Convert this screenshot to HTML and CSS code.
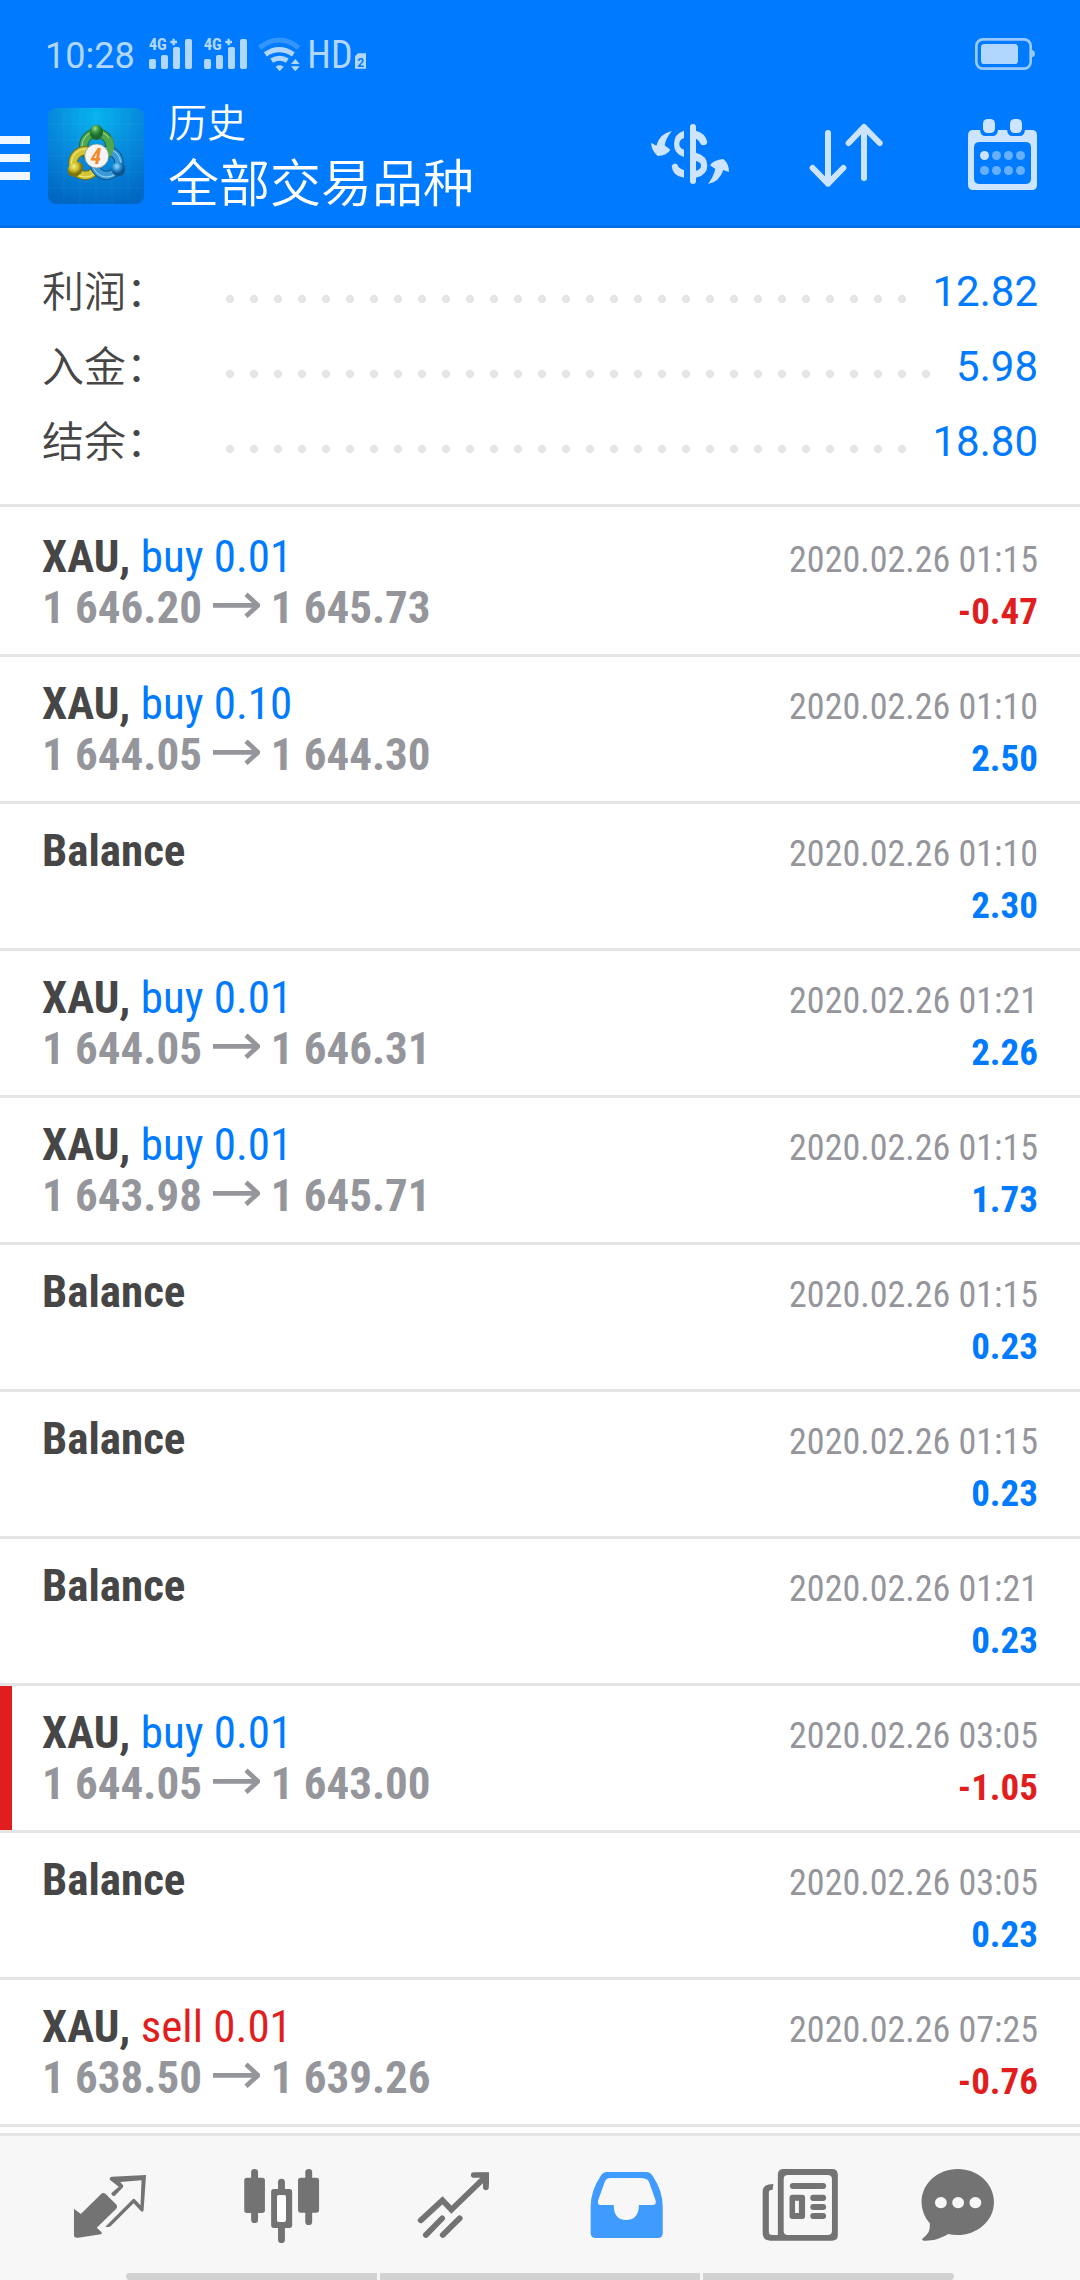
FILE: index.html
```html
<!DOCTYPE html>
<html lang="zh-CN">
<head>
<meta charset="utf-8">
<meta name="viewport" content="width=device-width, initial-scale=1">
<title>历史</title>
<link rel="stylesheet" href="styles.css">
</head>
<body>
<svg class="symbols" aria-hidden="true">
  <symbol id="arrow" viewBox="0 0 144 78"><path d="M3 40h126M102 7l36 33-36 33" fill="none" stroke="currentColor" stroke-width="14"/></symbol>
</svg>
<div class="app">
  <header class="header">
    <div class="status">
      <time class="clock">10:28</time>
      <svg class="signal" viewBox="0 0 132 96" aria-hidden="true">
        <text class="net" x="2" y="40">4G</text>
        <path d="M77 5v20M67 15h20" stroke="currentColor" stroke-width="7"/>
        <rect x="3" y="66" width="21" height="30" rx="6"/><rect x="39" y="54" width="21" height="42" rx="6"/><rect x="75" y="30" width="21" height="66" rx="6"/><rect x="111" y="6" width="21" height="90" rx="6"/>
      </svg>
      <svg class="signal" viewBox="0 0 132 96" aria-hidden="true">
        <text class="net" x="2" y="40">4G</text>
        <path d="M77 5v20M67 15h20" stroke="currentColor" stroke-width="7"/>
        <rect x="3" y="66" width="21" height="30" rx="6"/><rect x="39" y="54" width="21" height="42" rx="6"/><rect x="75" y="30" width="21" height="66" rx="6"/><rect x="111" y="6" width="21" height="90" rx="6"/>
      </svg>
      <svg class="wifi" viewBox="387 50 129 105" aria-hidden="true">
        <path d="M392 82Q450 36 509 82" fill="none" stroke="#3396ff" stroke-width="15"/>
        <path d="M409 102Q450 74 493 102M428 121Q452 106 475 121" fill="none" stroke="currentColor" stroke-width="15"/>
        <path d="M440 139q12-8 24 0l-12 14zM486 131l13-15 13 15zM486 138h26l-13 15z"/>
      </svg>
      <svg class="hd" viewBox="0 0 168 90" aria-hidden="true">
        <text class="hd-label" x="-8" y="84">HD</text>
        <path d="M144 40h24v46h-33V49z"/>
        <text class="sim" x="142" y="80">2</text>
      </svg>
      <svg class="battery" viewBox="0 0 180 96" aria-hidden="true">
        <rect x="4" y="4" width="163" height="88" rx="20" fill="none" stroke="#99caff" stroke-width="8"/>
        <rect x="18" y="18" width="111" height="60" rx="10"/>
        <path d="M171 36q9 3 9 11t-9 11z" fill="#99caff"/>
      </svg>
    </div>
    <div class="toolbar">
      <button class="menu" aria-label="菜单"><span></span><span></span><span></span></button>
      <svg class="logo" viewBox="0 0 288 288" aria-hidden="true">
        <defs>
          <radialGradient id="tile" cx=".5" cy=".08" r=".95"><stop offset="0" stop-color="#06b5ee"/><stop offset=".5" stop-color="#0789dc"/><stop offset="1" stop-color="#0067c2"/></radialGradient>
          <radialGradient id="green" cx=".4" cy=".25"><stop offset="0" stop-color="#a0dc90"/><stop offset=".5" stop-color="#3d9c45"/><stop offset="1" stop-color="#1c6a2c"/></radialGradient>
          <radialGradient id="gold" cx=".4" cy=".3"><stop offset="0" stop-color="#f6f08a"/><stop offset=".6" stop-color="#c9ba26"/><stop offset="1" stop-color="#7d7410"/></radialGradient>
          <radialGradient id="blue" cx=".4" cy=".3"><stop offset="0" stop-color="#9bdcfa"/><stop offset=".6" stop-color="#2a8fd0"/><stop offset="1" stop-color="#0d5590"/></radialGradient>
        </defs>
        <rect width="288" height="288" rx="24" fill="url(#tile)"/>
        <path d="M48 0v288M96 0v288M144 0v288M192 0v288M240 0v288M0 48h288M0 96h288M0 144h288M0 192h288M0 240h288" stroke="#fff" stroke-opacity=".08" stroke-width="2" fill="none"/>
        <g fill="none">
          <circle cx="146" cy="114" r="39" stroke="#1f6b2c" stroke-width="28"/><circle cx="146" cy="114" r="39" stroke="#4fa84f" stroke-width="22"/><circle cx="146" cy="114" r="44" stroke="#a8d99a" stroke-width="3"/>
          <circle cx="112" cy="165" r="37" stroke="#7b7010" stroke-width="28"/><circle cx="112" cy="165" r="37" stroke="#d3c534" stroke-width="22"/><circle cx="112" cy="165" r="42" stroke="#f4ee90" stroke-width="3"/>
          <circle cx="176" cy="165" r="37" stroke="#0d5590" stroke-width="28"/><circle cx="176" cy="165" r="37" stroke="#3a9ad8" stroke-width="22"/><circle cx="176" cy="165" r="42" stroke="#9ad8f8" stroke-width="3"/>
          <path d="M180 91a39 39 0 0 1-2 48" stroke="#4fa84f" stroke-width="22"/>
        </g>
        <ellipse cx="145" cy="73" rx="20" ry="23" fill="url(#green)"/>
        <path d="M60 180q10-22 36-18 16 12 5 31-16 22-36 9-8-7-5-22z" fill="url(#gold)"/>
        <path d="M190 184q0-20 20-22 18 0 21 20 0 20-18 23-20-1-23-21z" fill="url(#blue)"/>
        <circle cx="146" cy="144" r="36" fill="#f4f4f4" stroke="#7b8a80" stroke-width="2"/>
        <text class="four" x="144" y="167" text-anchor="middle">4</text>
      </svg>
      <div class="titles">
        <p class="section">历史</p>
        <h1 class="symbol-title">全部交易品种</h1>
      </div>
      <div class="actions">
        <button class="action" aria-label="货币"><svg viewBox="144 336 252 252">
          <path d="M270 381q0-9 9-9t9 9v162q0 9-9 9t-9-9z"/>
          <path d="M252 392v22q-14 5-14 18t14 17v22q-30-8-30-39t30-40zM252 533v-22q-18-7-19-16-8-10-18 2 2 31 37 36zM288 392q29 8 34 34-2 10-12 10-7 0-10-8-3-8-12-12zM288 458q34 9 34 39 0 28-34 36v-21q15-4 15-15t-15-14z"/>
          <path d="M216 393q-18 20-22 43l17 13q-10 17-38 19-18-15-20-40l16 9q9-36 47-44zM324 552q16-21 22-45l-16-11q11-17 40-19 17 14 17 39l-17-6q-12 36-46 42z"/>
        </svg></button>
        <button class="action" aria-label="排序"><svg class="lines" viewBox="612 336 252 252">
          <path d="M684 399v152M638 504l46 47 46-47M792 534V381M746 429l46-48 47 48"/>
        </svg></button>
        <button class="action" aria-label="日历"><svg viewBox="1080 336 252 252">
          <path fill-rule="evenodd" d="M1120 390h20q2 18 16 18h22q14 0 16-18h27q2 18 16 18h22q14 0 16-18h20q16 0 16 16v148q0 16-16 16h-175q-16 0-16-16V406q0-16 16-16zm20 36q-18 0-18 16v94q0 16 18 16h136q17 0 17-16v-94q0-16-17-16z"/>
          <rect x="1149" y="357" width="36" height="42" rx="14"/><rect x="1230" y="357" width="36" height="42" rx="14"/>
          <circle cx="1153.500" cy="466.500" r="13.500"/>
          <g fill="#66b0ff"><circle cx="1189.500" cy="466.500" r="13.500"/><circle cx="1225.500" cy="466.500" r="13.500"/><circle cx="1261.500" cy="466.500" r="13.500"/><circle cx="1153.500" cy="511.500" r="13.500"/><circle cx="1189.500" cy="511.500" r="13.500"/><circle cx="1225.500" cy="511.500" r="13.500"/><circle cx="1261.500" cy="511.500" r="13.500"/></g>
        </svg></button>
      </div>
    </div>
  </header>

  <main class="content">
    <dl class="summary">
      <div class="total"><dt>利润：</dt><dd>12.82</dd></div>
      <div class="total"><dt>入金：</dt><dd>5.98</dd></div>
      <div class="total"><dt>结余：</dt><dd>18.80</dd></div>
    </dl>
    <ul class="deals">
      <li class="deal"><div class="left"><p class="name"><b>XAU,</b> <span class="buy">buy 0.01</span></p><p class="prices">1 646.20 <svg class="arrow"><use href="#arrow"/></svg> 1 645.73</p></div><div class="right"><time>2020.02.26 01:15</time><span class="profit loss">-0.47</span></div></li>
      <li class="deal"><div class="left"><p class="name"><b>XAU,</b> <span class="buy">buy 0.10</span></p><p class="prices">1 644.05 <svg class="arrow"><use href="#arrow"/></svg> 1 644.30</p></div><div class="right"><time>2020.02.26 01:10</time><span class="profit">2.50</span></div></li>
      <li class="deal"><div class="left"><p class="name"><b>Balance</b></p></div><div class="right"><time>2020.02.26 01:10</time><span class="profit">2.30</span></div></li>
      <li class="deal"><div class="left"><p class="name"><b>XAU,</b> <span class="buy">buy 0.01</span></p><p class="prices">1 644.05 <svg class="arrow"><use href="#arrow"/></svg> 1 646.31</p></div><div class="right"><time>2020.02.26 01:21</time><span class="profit">2.26</span></div></li>
      <li class="deal"><div class="left"><p class="name"><b>XAU,</b> <span class="buy">buy 0.01</span></p><p class="prices">1 643.98 <svg class="arrow"><use href="#arrow"/></svg> 1 645.71</p></div><div class="right"><time>2020.02.26 01:15</time><span class="profit">1.73</span></div></li>
      <li class="deal"><div class="left"><p class="name"><b>Balance</b></p></div><div class="right"><time>2020.02.26 01:15</time><span class="profit">0.23</span></div></li>
      <li class="deal"><div class="left"><p class="name"><b>Balance</b></p></div><div class="right"><time>2020.02.26 01:15</time><span class="profit">0.23</span></div></li>
      <li class="deal"><div class="left"><p class="name"><b>Balance</b></p></div><div class="right"><time>2020.02.26 01:21</time><span class="profit">0.23</span></div></li>
      <li class="deal stopped"><div class="left"><p class="name"><b>XAU,</b> <span class="buy">buy 0.01</span></p><p class="prices">1 644.05 <svg class="arrow"><use href="#arrow"/></svg> 1 643.00</p></div><div class="right"><time>2020.02.26 03:05</time><span class="profit loss">-1.05</span></div></li>
      <li class="deal"><div class="left"><p class="name"><b>Balance</b></p></div><div class="right"><time>2020.02.26 03:05</time><span class="profit">0.23</span></div></li>
      <li class="deal"><div class="left"><p class="name"><b>XAU,</b> <span class="sell">sell 0.01</span></p><p class="prices">1 638.50 <svg class="arrow"><use href="#arrow"/></svg> 1 639.26</p></div><div class="right"><time>2020.02.26 07:25</time><span class="profit loss">-0.76</span></div></li>
    </ul>
  </main>

  <footer class="footer">
    <nav class="tabs">
      <a class="tab" href="#quotes" aria-label="行情"><svg viewBox="189 150 261 270" preserveAspectRatio="none">
        <path d="M215 296l20 16 58-59q7-7 14-1l30 31q6 7 0 14l-56 56 14 14q3 4-2 6l-66 10q-12 2-12-8z"/>
        <path fill-rule="evenodd" d="M424 195l-7 105q-1 8-8 3l-21-23-66 68q-6 5-16 2l78-81q4-5 9 0l15 17 3-75-62 5 8 9q3 4-1 8l-24 26q-8-2-9-9l22-20-26-21q-2-7 6-9z"/>
      </svg></a>
      <a class="tab" href="#chart" aria-label="图表"><svg viewBox="688 150 261 270" preserveAspectRatio="none">
        <rect x="709" y="203" width="60" height="106" rx="8"/><rect x="729" y="177" width="20" height="162" rx="10"/>
        <rect x="865" y="203" width="61" height="105" rx="8"/><rect x="886" y="177" width="20" height="168" rx="10"/>
        <rect x="807" y="206" width="20" height="45" rx="10"/><rect x="807" y="340" width="20" height="59" rx="10"/>
        <path fill-rule="evenodd" d="M795 237h45q8 0 8 8v101q0 8-8 8h-45q-8 0-8-8V245q0-8 8-8zm16 18q-7 0-7 8v65q0 8 7 8h12q7 0 7-8v-65q0-8-7-8z"/>
        <rect x="804" y="255" width="26" height="81" rx="7" fill="#fff"/>
      </svg></a>
      <a class="tab" href="#trade" aria-label="交易"><svg viewBox="1188 150 261 270" preserveAspectRatio="none">
        <path class="line" d="M1222 331l63-60 26 28 98-98M1376 195h35v37"/>
        <path class="line" d="M1237 375l47-50M1286 375l49-50"/>
        <path d="M1385 188h35v38z"/>
      </svg></a>
      <a class="tab active" href="#history" aria-label="历史" aria-current="page"><svg viewBox="119 150 261 270" preserveAspectRatio="none">
        <path fill-rule="evenodd" d="M194 186h114q12 0 19 12 29 45 29 92v80q0 14-14 14H162q-15 0-15-14v-80q0-47 29-92 7-12 18-12zm10 18q-12 0-16 11l-19 55q-4 15 7 15h38q0 45 36 45t37-45h40q12 0 8-15l-19-55q-4-11-26-11z"/>
      </svg></a>
      <a class="tab" href="#news" aria-label="新闻"><svg viewBox="618 150 261 270" preserveAspectRatio="none">
        <path fill-rule="evenodd" d="M707 177h140q17 0 17 17v182q0 16-17 16H668q-22 0-22-22V244q0-22 31-22l-2 17q-11 0-11 8v119q0 9 10 9h16V194q0-17 17-17zm12 18q-12 0-12 12v156q0 12 12 12h115q13 0 13-12V207q0-12-13-12z"/>
        <rect x="725" y="219" width="105" height="18" rx="9"/><rect x="784" y="254" width="46" height="19" rx="9"/><rect x="784" y="282" width="46" height="18" rx="9"/><rect x="784" y="309" width="46" height="18" rx="9"/>
        <path fill-rule="evenodd" d="M732 254h29q8 0 8 8v57q0 8-8 8h-29q-8 0-8-8v-57q0-8 8-8zm8 18v37h11v-37z"/>
      </svg></a>
      <a class="tab" href="#chat" aria-label="消息"><svg viewBox="1118 150 261 270" preserveAspectRatio="none">
        <path fill-rule="evenodd" d="M1213 177c58 0 105 44 105 99 0 68-68 112-133 96-25 16-48 21-70 20q-9-2-3-7c20-16 20-26 20-45-15-17-24-41-24-64 0-55 47-99 105-99zm-49 84a17 17 0 1 0 .1 0zm50 0a17 17 0 1 0 .1 0zm50 0a17 17 0 1 0 .1 0z"/>
      </svg></a>
    </nav>
    <div class="gesture"><span class="side"></span><span class="mid"></span><span class="side"></span></div>
  </footer>
</div>
</body>
</html>
```
FILE: styles.css
```css
* { box-sizing: border-box; margin: 0; padding: 0; }
body { background: #fff; color: #464646; font-family: Roboto, "Noto Sans CJK SC", sans-serif; }
button { border: 0; background: none; color: inherit; }
svg { display: block; fill: currentColor; }
.symbols { display: none; }

.app { display: flex; flex-direction: column; min-height: 100vh; }

.header { background: #007aff; border-bottom: 3px solid #006fe6; color: #fff; }
.status { display: flex; align-items: flex-start; height: 81px; padding: 36px 45px 0; color: #b2d7ff; }
.clock { width: 103px; font-size: 36px; line-height: 40px; }
.signal { width: 44px; height: 32px; margin: 1px 11px 0 0; overflow: visible; }
.net { font: bold 50px "Roboto Condensed", sans-serif; }
.wifi { width: 43px; height: 35px; margin-top: 1px; }
.hd { width: 56px; height: 30px; margin: 4px 0 0 9px; overflow: visible; }
.hd-label { font: 114px "Roboto Condensed", sans-serif; }
.sim { font: bold 36px Roboto, sans-serif; fill: #007aff; }
.battery { width: 60px; height: 32px; margin: 2px 0 0 auto; }

.toolbar { display: flex; align-items: flex-start; height: 144px; padding-right: 36px; }
.menu { display: grid; gap: 10px; width: 30px; margin: 55px 18px 0 0; }
.menu span { height: 8px; background: #f0f7ff; }
.logo { width: 96px; height: 96px; margin-top: 27px; }
.four { font: italic bold 66px "Roboto Condensed", sans-serif; fill: #f58a2c; }
.titles { flex: 1; margin: 12px 0 0 24px; font-weight: 350; font-family: "Noto Sans CJK SC", sans-serif; white-space: nowrap; }
.section { font-size: 39px; line-height: 54px; }
.symbol-title { font-size: 51px; font-weight: 350; line-height: 66px; }
.actions { display: flex; gap: 72px; margin-top: 31px; color: #cce4ff; }
.action { width: 84px; height: 84px; }
.action svg { width: 100%; height: 100%; }
.lines { fill: none; stroke: currentColor; stroke-width: 18; stroke-linecap: round; stroke-linejoin: round; }

.content { flex: 1; }
.summary { padding: 26px 42px 25px; border-bottom: 3px solid #e5e5e5; }
.total { display: flex; height: 75px; font-size: 42px; line-height: 75px; }
.total dt { width: 184px; font-family: "Noto Sans CJK SC", sans-serif; font-weight: 350; line-height: 69px; }
.total dd { display: flex; flex: 1; gap: 12px; color: #007aff; }
.total dd::before { content: ""; flex: 1; background: radial-gradient(circle at 4px 45px, #e5e5e5 4px, transparent 4px) repeat-x 0 0 / 24px 100%; }

.deals { padding-top: 3px; list-style: none; }
.deal { display: flex; justify-content: space-between; height: 147px; padding: 21px 42px 0; border-bottom: 3px solid #e5e5e5; font-family: "Roboto Condensed", sans-serif; line-height: 51px; white-space: nowrap; }
.name, .prices { font-size: 45px; }
.prices { color: #95969b; font-weight: bold; }
.arrow { display: inline-block; width: 48px; height: 26px; vertical-align: 5px; }
.right { display: grid; grid-auto-rows: 51px; align-content: start; padding-top: 4px; font-size: 36px; text-align: right; }
.right time { color: #95969b; }
.profit { color: #007aff; font-size: 37px; font-weight: bold; }
.buy { color: #007aff; }
.sell, .profit.loss { color: #e11e1e; }
.stopped { box-shadow: inset 12px 0 #e11e1e; }

.footer { border-top: 3px solid #e5e5e5; background: #f7f7f7; }
.tabs { display: flex; justify-content: space-around; height: 137px; padding: 24px 24px 0; color: #737373; }
.tab { width: 90px; height: 90px; color: inherit; }
.tab svg { width: 100%; height: 100%; overflow: visible; }
.active { color: #409bff; }
.line { fill: none; stroke: currentColor; stroke-width: 17; stroke-linecap: round; }
.gesture { display: flex; gap: 3px; height: 7px; padding: 0 126px; }
.gesture span { flex: 252; background: #d2d2d2; }
.gesture .mid { flex: 320; }
.gesture .side:first-child { border-radius: 4px 0 0 4px; }
.gesture .side:last-child { border-radius: 0 4px 4px 0; }
```
